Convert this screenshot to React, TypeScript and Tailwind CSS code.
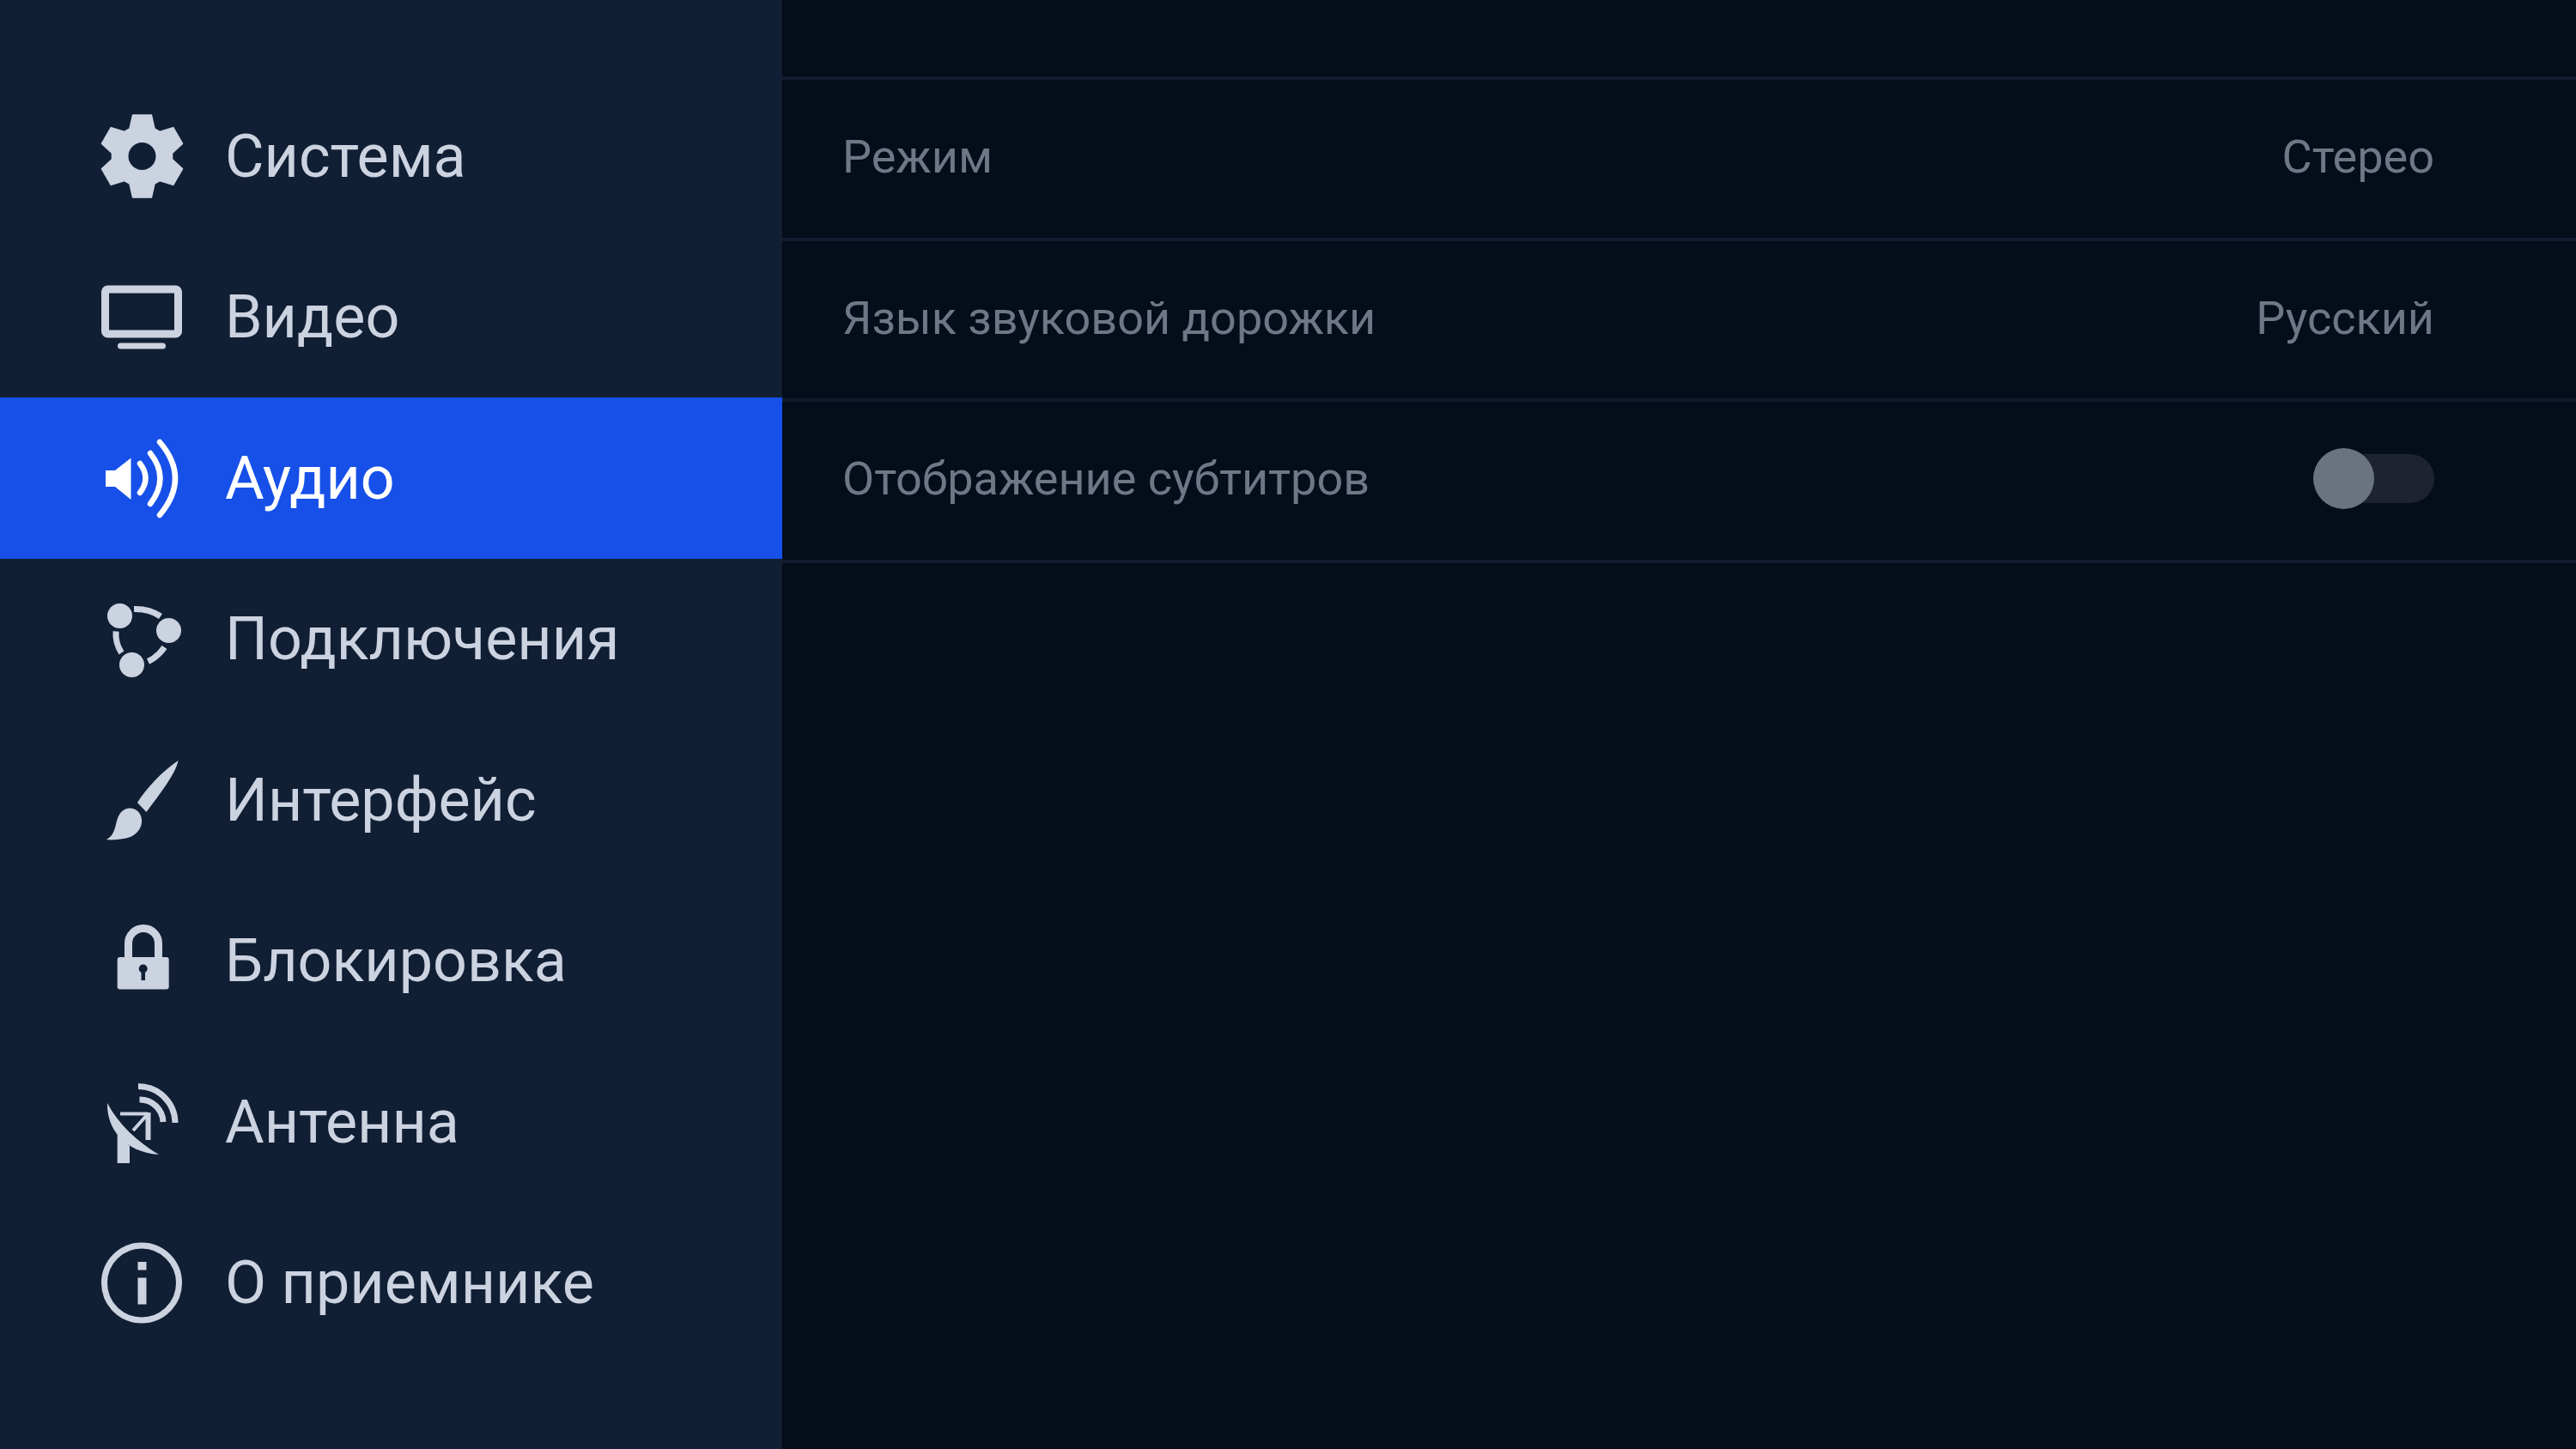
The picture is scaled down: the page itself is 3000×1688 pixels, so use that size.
import type { ReactNode } from "react";

const ICON_COLOR = "#ccd3e0";

// six toothed gear, points worked out once from the angles
function gearPath() {
  const cx = 55.5;
  const cy = 55;
  const pts: string[] = [];
  for (let i = 0; i < 6; i++) {
    const a = (-90 + i * 60) * (Math.PI / 180);
    const ring: [number, number][] = [
      [35, -0.42],
      [49, -0.22],
      [49, 0.22],
      [35, 0.42],
    ];
    for (const [r, d] of ring) {
      pts.push(`${(cx + r * Math.cos(a + d)).toFixed(2)} ${(cy + r * Math.sin(a + d)).toFixed(2)}`);
    }
  }
  return `M${pts.join("L")}Z`;
}

function Icon({ children }: { children: ReactNode }) {
  return (
    <svg viewBox="0 0 110 110" className="w-[110px] h-[110px] shrink-0">
      {children}
    </svg>
  );
}

const GearIcon = ({ color }: { color: string }) => (
  <Icon>
    <path
      d={`${gearPath()}M55.5 38a17 17 0 1 0 0 34a17 17 0 1 0 0-34Z`}
      fill={color}
      stroke={color}
      strokeWidth="2"
      strokeLinejoin="round"
      fillRule="evenodd"
    />
  </Icon>
);

const TvIcon = ({ color }: { color: string }) => (
  <Icon>
    <rect x="12.5" y="23" width="85" height="52" rx="3" fill="none" stroke={color} strokeWidth="9" />
    <rect x="27" y="85.5" width="56" height="7" rx="3.5" fill={color} />
  </Icon>
);

const AudioIcon = ({ color }: { color: string }) => (
  <Icon>
    <path d="M13 46H24L42.5 31.5V80L24 65H13Z" fill={color} />
    <g fill="none" stroke={color} strokeWidth="6.5" strokeLinecap="round">
      <path d="M53 38Q66 55 53 72" />
      <path d="M65 26Q88 55 65 85" />
      <path d="M76 13Q112 55 76 98" />
    </g>
  </Icon>
);

const ConnectIcon = ({ color }: { color: string }) => (
  <Icon>
    <circle cx="29.5" cy="28.5" r="14.5" fill={color} />
    <circle cx="86.5" cy="45.5" r="14.5" fill={color} />
    <circle cx="43.5" cy="85.5" r="14.5" fill={color} />
    <g fill="none" stroke={color} strokeWidth="7">
      <path d="M46 20.5Q64 20 77 29" />
      <path d="M81.5 65Q74 76 62.5 81.5" />
      <path d="M25 46.5Q24 60 31.5 71.5" />
    </g>
  </Icon>
);

const BrushIcon = ({ color }: { color: string }) => (
  <Icon>
    <path d="M50 58C60 42 78 22 97.5 9C95 24 76 48 60.5 69Z" fill={color} />
    <path
      d="M14 101C24 96 24 85 27 76C30 68 36 64 42 64.5C50 65 56 72 55 81C54 92 44 99 34 100C27 101 20 102 14 101Z"
      fill={color}
    />
  </Icon>
);

const LockIcon = ({ color }: { color: string }) => (
  <Icon>
    <path d="M39.5 52V35A17.5 17.5 0 0 1 74.5 35V52" fill="none" stroke={color} strokeWidth="9" />
    <rect x="26.7" y="51" width="60" height="37.5" rx="3" fill={color} />
    <circle cx="56.7" cy="64.5" r="5" fill="#111f35" />
    <rect x="54.5" y="65" width="4.5" height="13" fill="#111f35" />
  </Icon>
);

const AntennaIcon = ({ color }: { color: string }) => (
  <Icon>
    <path d="M15 33C28 58 50 78 75 93C34 90 14 62 15 33Z" fill={color} />
    <path d="M26.7 67L41 83V103H26.7Z" fill={color} />
    <g fill="none" stroke={color}>
      <path d="M30 45.5H62" strokeWidth="4" />
      <path d="M62.5 44V76" strokeWidth="6" />
      <path d="M61 47L45 65" strokeWidth="4" />
      <path d="M52.5 29A27 27 0 0 1 80 55" strokeWidth="7" />
      <path d="M51 13.5A43 43 0 0 1 94 56" strokeWidth="7" />
    </g>
  </Icon>
);

const InfoIcon = ({ color }: { color: string }) => (
  <Icon>
    <circle cx="55" cy="55.5" r="43.5" fill="none" stroke={color} strokeWidth="7" />
    <rect x="50.5" y="31" width="10" height="9.5" fill={color} />
    <rect x="50.5" y="49.5" width="10" height="31" fill={color} />
  </Icon>
);

const menu = [
  { label: "Система", icon: GearIcon },
  { label: "Видео", icon: TvIcon },
  { label: "Аудио", icon: AudioIcon, active: true },
  { label: "Подключения", icon: ConnectIcon },
  { label: "Интерфейс", icon: BrushIcon },
  { label: "Блокировка", icon: LockIcon },
  { label: "Антенна", icon: AntennaIcon },
  { label: "О приемнике", icon: InfoIcon },
];

function Toggle() {
  return (
    <div className="relative w-[141px] h-[57px] rounded-full bg-[#1d2330]">
      <div className="absolute left-0 top-[-7px] w-[71px] h-[71px] rounded-full bg-[#6b7280]" />
    </div>
  );
}

function Row({ label, children }: { label: string; children: ReactNode }) {
  return (
    <div className="h-[187.5px] box-border border-b-4 border-[#111c2e] pb-[4px] pl-[70px] pr-[165px] flex items-center justify-between text-[54px] text-[#6f7786]">
      <span>{label}</span>
      {children}
    </div>
  );
}

export default function App() {
  return (
    <div className="w-[3000px] h-[1688px] flex overflow-hidden bg-[#050c1a] font-['Roboto',sans-serif]">
      <aside className="w-[911px] shrink-0 pt-[88px] bg-[#111f35]">
        {menu.map((item) => {
          const IconEl = item.icon;
          return (
            <div
              key={item.label}
              className={
                item.active
                  ? "h-[187.5px] pl-[110px] flex items-center gap-[42px] text-[70px] bg-[#1650e8] text-white"
                  : "h-[187.5px] pl-[110px] flex items-center gap-[42px] text-[70px] text-[#ccd3e0]"
              }
            >
              <IconEl color={item.active ? "#ffffff" : ICON_COLOR} />
              <span className="pt-[1px]">{item.label}</span>
            </div>
          );
        })}
      </aside>
      <main className="flex-1 pt-[89px]">
        <div className="border-t-4 border-[#111c2e]">
          <Row label="Режим">
            <span>Стерео</span>
          </Row>
          <Row label="Язык звуковой дорожки">
            <span>Русский</span>
          </Row>
          <Row label="Отображение субтитров">
            <Toggle />
          </Row>
        </div>
      </main>
    </div>
  );
}
